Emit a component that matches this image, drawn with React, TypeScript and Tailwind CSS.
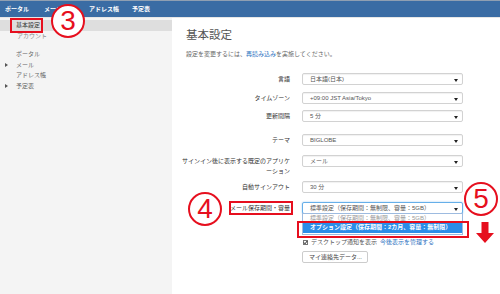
import React from 'react';

const rows = [
  { label: '言語', value: '日本語(日本)', h: 'h-[19px]' },
  { label: 'タイムゾーン', value: '+09:00 JST Asia/Tokyo', h: 'h-[18px]' },
  { label: '更新間隔', value: '5 分', h: 'h-[24px]' },
  { label: 'テーマ', value: 'BIGLOBE', h: 'h-[21px]' },
];

function Caret() {
  return (
    <svg width="4" height="3" viewBox="0 0 4 3" className="absolute right-[4px] top-[5px]">
      <path d="M0 0H4L2 3Z" fill="#222" />
    </svg>
  );
}

function Select({ value, focused }: { value: string; focused?: boolean }) {
  return (
    <div
      className={
        'relative ml-[12px] w-[161px] h-[12px] rounded-[2px] bg-white pl-[7px] text-[6px] leading-[10px] text-[#555] border ' +
        (focused ? 'border-[#66afe9] shadow-[0_0_2px_#9cc8ef]' : 'border-[#d2d2d2] shadow-[inset_0_1px_1px_rgba(0,0,0,0.06)]')
      }
    >
      {value}
      <Caret />
    </div>
  );
}

function Circle({ n, cls }: { n: string; cls: string }) {
  return (
    <div
      className={
        'absolute w-[34px] h-[34px] rounded-full border-2 border-[#e60f1e] bg-white flex items-center justify-center text-[28px] leading-none text-[#e60f1e] ' +
        cls
      }
    >
      <span className="-mt-[1px]">{n}</span>
    </div>
  );
}

export default function App() {
  return (
    <div className="relative w-[500px] h-[294px] overflow-hidden bg-white font-['Liberation_Sans','Noto_Sans_CJK_JP',sans-serif]">
      <nav className="h-[17px] bg-[#3a6ca4] border-t border-[#8f9fb2] flex items-center text-[6px] font-bold text-white">
        <span className="ml-[5px]">ポータル</span>
        <span className="ml-[15px]">メール</span>
        <span className="ml-[27px]">アドレス帳</span>
        <span className="ml-[13px]">予定表</span>
      </nav>

      <div className="flex h-[277px] border-t border-[#e6e6e6]">
        <aside className="w-[172px] bg-[#f4f4f4] pt-[2px] text-[6px] text-[#666]">
          <div className="h-[11px] leading-[11px] bg-[#dedede] pl-[16px] text-[#333]">基本設定</div>
          <div className="h-[11px] leading-[11px] pl-[17px] text-[#888]">アカウント</div>
          <div className="mt-[7px]">
            {[
              ['ポータル', false],
              ['メール', true],
              ['アドレス帳', false],
              ['予定表', true],
            ].map(([t, arrow]) => (
              <div key={t as string} className="relative h-[10.5px] leading-[10.5px] pl-[16px]">
                {arrow && (
                  <svg width="3" height="4" viewBox="0 0 3 4" className="absolute left-[5px] top-[3.5px]">
                    <path d="M0 0L3 2L0 4Z" fill="#555" />
                  </svg>
                )}
                {t}
              </div>
            ))}
          </div>
        </aside>

        <main className="flex-1 bg-white pl-[14px] pt-[10px]">
          <h1 className="text-[11.5px] leading-[14px] text-[#555] font-normal">基本設定</h1>
          <p className="mt-[8px] text-[6px] leading-[8px] text-[#666]">
            設定を変更するには、<span className="text-[#2e73bf]">再読み込み</span>を実施してください。
          </p>

          <div className="mt-[15px] flex flex-col">
            {rows.map((r) => (
              <div key={r.label} className={'flex items-start ' + r.h}>
                <div className="w-[104px] pt-[2px] text-right text-[6px] leading-[8px] text-[#333]">{r.label}</div>
                <Select value={r.value} />
              </div>
            ))}
            <div className="flex items-start h-[26px]">
              <div className="w-[112px] -ml-[8px] pt-[1px] text-right text-[6px] leading-[10px] text-[#333] whitespace-nowrap">
                サインイン後に表示する既定のアプリケ
                <br />
                ーション
              </div>
              <Select value="メール" />
            </div>
            <div className="flex items-start h-[21px]">
              <div className="w-[104px] pt-[2px] text-right text-[6px] leading-[8px] text-[#333]">自動サインアウト</div>
              <Select value="30 分" />
            </div>
            <div className="flex items-start h-[35px]">
              <div className="w-[104px] pt-[2px] text-right text-[6px] leading-[8px] text-[#333] whitespace-nowrap">メール保存期間・容量</div>
              <div className="relative">
                <Select value="標準設定（保存期間：無制限、容量：5GB）" focused />
                <div className="absolute left-[12px] top-[11px] w-[161px] h-[22px] bg-white border border-[#9dbbe0] text-[6px]">
                  <div className="h-[8px] leading-[8px] pl-[7px] text-[#999]">標準設定（保存期間：無制限、容量：5GB）</div>
                  <div className="h-[11px] leading-[11px] pl-[7px] bg-[#2b8de8] text-white font-bold">
                    オプション設定（保存期間：2カ月、容量：無制限）
                  </div>
                </div>
              </div>
            </div>
            <div className="flex items-center h-[10px] pl-[117px] text-[6px] text-[#555]">
              <span className="relative w-[5px] h-[5px] border border-[#777] bg-white mr-[3px]">
                <svg width="5" height="5" viewBox="0 0 5 5" className="absolute -left-[1px] -top-[1px]">
                  <path d="M1 2.5L2 3.8L4.2 1" stroke="#222" strokeWidth="1" fill="none" />
                </svg>
              </span>
              デスクトップ通知を表示
              <span className="ml-[3px] text-[#2e73bf]">今後表示を管理する</span>
            </div>
            <div className="mt-[4px] ml-[116px]">
              <div className="w-[66px] h-[12px] border border-[#ccc] rounded-[2px] bg-white pl-[6px] text-[6px] leading-[10px] text-[#444]">
                マイ連絡先データ...
              </div>
            </div>
          </div>
        </main>
      </div>

      {/* annotations */}
      <div className="absolute left-[10px] top-[18px] w-[33px] h-[15px] border-2 border-[#e60f1e]" />
      <Circle n="3" cls="left-[51px] top-[4px]" />
      <div className="absolute left-[229px] top-[201px] w-[64px] h-[14px] border-2 border-[#e60f1e]" />
      <Circle n="4" cls="left-[188px] top-[192px]" />
      <Circle n="5" cls="left-[464px] top-[182px]" />
      <div className="absolute left-[297px] top-[221px] w-[172px] h-[17px] border-2 border-[#e60f1e]" />
      <svg width="18" height="21" viewBox="0 0 18 21" className="absolute left-[476px] top-[222px]">
        <path d="M5.5 0H12.5V11H18L9 21L0 11H5.5Z" fill="#e60f1e" />
      </svg>
    </div>
  );
}
